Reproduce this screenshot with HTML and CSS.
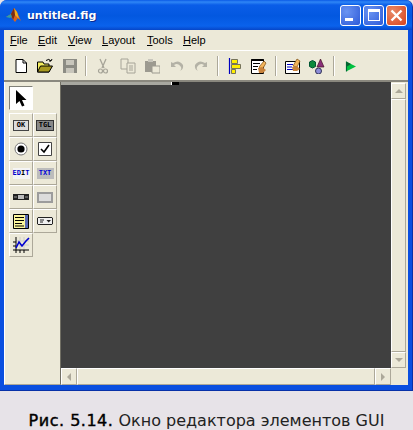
FILE: index.html
```html
<!DOCTYPE html>
<html lang="ru">
<head>
<meta charset="utf-8">
<title>untitled.fig</title>
<link rel="stylesheet" href="styles.css">
</head>
<body>
<div class="window">
  <div class="titlebar">
    <svg class="app-icon" width="16" height="16" viewBox="0 0 16 16"><path d="M0 10 L5 7 L8 1 L11 5 L15 14 L12 11 L9 15 L5 10 Z" fill="#d9641e"/><path d="M0 10 L5 7 L7 9 L4 11 Z" fill="#2f9ea8"/><path d="M8 1 L11 5 L13 12 L9 8 Z" fill="#f0b020"/><path d="M5 7 L8 1 L9 8 L7 13 Z" fill="#7a2c18"/></svg>
    <span class="title-text">untitled.fig</span>
    <div class="caption-btns">
      <div class="cbtn"><span class="glyph-min"></span></div>
      <div class="cbtn"><span class="glyph-max"></span></div>
      <div class="cbtn close"><svg width="13" height="13" viewBox="0 0 13 13"><path d="M1.5 1.5 L11.5 11.5 M11.5 1.5 L1.5 11.5" stroke="#fff" stroke-width="2.4"/></svg></div>
    </div>
  </div>
  <div class="client">
    <div class="menubar">
      <span class="menu"><u>F</u>ile</span>
      <span class="menu"><u>E</u>dit</span>
      <span class="menu"><u>V</u>iew</span>
      <span class="menu"><u>L</u>ayout</span>
      <span class="menu"><u>T</u>ools</span>
      <span class="menu"><u>H</u>elp</span>
    </div>
    <div class="toolbar">
      <svg class="tool" viewBox="0 0 16 16"><path d="M3 1.5 H10 L13.5 5 V14.5 H3 Z" fill="#fff" stroke="#000"/><path d="M10 1.5 V5 H13.5" fill="none" stroke="#000"/></svg>
      <svg class="tool" viewBox="0 0 16 16"><path d="M0.5 4 H6 L7 6 H12 V14 H0.5 Z" fill="#f4ee60" stroke="#000"/><path d="M0.5 14 L3.5 8 H15.5 L12 14 Z" fill="#a89a20" stroke="#000"/><path d="M9 2.5 Q12 0 14 3 M14 3 L12 3 M14 3 L15 1" fill="none" stroke="#000"/></svg>
      <svg class="tool" viewBox="0 0 16 16"><path d="M1 1 H15 V15 H1 Z" fill="#8c8c84"/><path d="M4 2 H12 V7 H4 Z" fill="#c8c6bc"/><path d="M4 10 H12 V15 H4 Z" fill="#c8c6bc"/></svg>
      <span class="sep"></span>
      <svg class="tool" viewBox="0 0 16 16"><path d="M5 1 L9 10 M11 1 L7 10" stroke="#a6a498" stroke-width="1.3"/><circle cx="5.5" cy="13" r="2" fill="none" stroke="#a6a498" stroke-width="1.2"/><circle cx="10.5" cy="13" r="2" fill="none" stroke="#a6a498" stroke-width="1.2"/></svg>
      <svg class="tool" viewBox="0 0 16 16"><path d="M1 1 H8 V11 H1 Z" fill="#ece9d8" stroke="#a6a498"/><path d="M7 5 H15 V15 H7 Z" fill="#ece9d8" stroke="#a6a498"/><path d="M9 8 H13 M9 10 H13 M9 12 H13" stroke="#a6a498"/></svg>
      <svg class="tool" viewBox="0 0 16 16"><path d="M1 3 H12 V14 H1 Z" fill="#9c9a90"/><path d="M4 1 H9 V4 H4 Z" fill="#c8c6bc"/><path d="M8 8 H16 V15 H8 Z" fill="#ece9d8" stroke="#9c9a90"/></svg>
      <svg class="tool" viewBox="0 0 16 16"><path d="M2 4 V9 H7 L5 7 Q9 4 12 9 Q13 12 10 13 Q15 12 14 7 Q10 1 4 5 Z" fill="#b4b2a6"/></svg>
      <svg class="tool" viewBox="0 0 16 16"><path d="M14 4 V9 H9 L11 7 Q7 4 4 9 Q3 12 6 13 Q1 12 2 7 Q6 1 12 5 Z" fill="#b4b2a6"/></svg>
      <span class="sep"></span>
      <svg class="tool" viewBox="0 0 16 16"><path d="M2.5 0 V16" stroke="#0000c0" stroke-width="1.2"/><path d="M4.5 1.5 H10.5 V5.5 H4.5 Z M4.5 6.5 H13.5 V10.5 H4.5 Z M4.5 11.5 H8.5 V15.5 H4.5 Z" fill="#ffee00" stroke="#555" stroke-width="0.8"/></svg>
      <svg class="tool" viewBox="0 0 16 16"><path d="M0.5 1.5 H12.5 V15.5 H0.5 Z" fill="#fff" stroke="#000"/><path d="M0.5 1 H12.5 V3 H0.5 Z" fill="#000"/><path d="M2 5.5 H9 M2 8.5 H7 M2 11.5 H6" stroke="#000"/><path d="M8 9 L13 3 L15 5 L11 12 Z" fill="#f2b45a" stroke="#7a4a10" stroke-width="0.7"/><path d="M7 10 L11 9 L15 12 L12 15 H8 Z" fill="#c8833c"/></svg>
      <span class="sep"></span>
      <svg class="tool" viewBox="0 0 16 16"><path d="M0.5 3.5 H14.5 V15.5 H0.5 Z" fill="#fff" stroke="#000"/><path d="M2 6.5 H8 M2 9 H7 M2 11.5 H9" stroke="#0000c0"/><path d="M8 8 L12 1 L15 3 L12 9 Z" fill="#f2b45a" stroke="#7a4a10" stroke-width="0.7"/><path d="M7 9 L12 8 L15 11 L12 13 H8 Z" fill="#c8833c"/></svg>
      <svg class="tool" viewBox="0 0 16 16"><path d="M0.5 4 L3.5 2.5 L6.5 4 V8.5 L3.5 10 L0.5 8.5 Z" fill="#0c8a3c" stroke="#053"/><path d="M11.5 1 L15 9 H8 Z" fill="#8a2f7a" stroke="#412" stroke-width="0.7"/><circle cx="9.5" cy="13" r="3" fill="#8d8dd8" stroke="#335"/></svg>
      <span class="sep"></span>
      <svg class="tool" viewBox="0 0 16 16"><path d="M3.5 3.5 V13.5" stroke="#063" stroke-width="1.2"/><path d="M4 4 L13 8.5 L4 13 Z" fill="#00c040"/><path d="M4 4 L8 6 L4 8.5 Z" fill="#086030"/></svg>
    </div>
    <div class="body">
      <div class="palette">
        <div class="pal-btn pressed"><svg width="12" height="17" viewBox="0 0 12 17"><path d="M1 0 V14 L4.5 11 L7 16.5 L9.5 15.5 L7 10 H11.5 Z" fill="#000"/></svg></div>
        <span class="pal-empty"></span>
        <div class="pal-btn"><span class="ic-ok">OK</span></div>
        <div class="pal-btn"><span class="ic-tgl">TGL</span></div>
        <div class="pal-btn"><svg width="14" height="14" viewBox="0 0 14 14"><circle cx="7" cy="7" r="6" fill="#fff" stroke="#777"/><circle cx="7" cy="7" r="3.6" fill="#000"/></svg></div>
        <div class="pal-btn"><svg width="14" height="14" viewBox="0 0 14 14"><path d="M0.5 0.5 H13.5 V13.5 H0.5 Z" fill="#fff" stroke="#444"/><path d="M3 7 L6 10 L11 3" fill="none" stroke="#000" stroke-width="1.6"/></svg></div>
        <div class="pal-btn"><span class="ic-edit">ED<span class="ibeam">I</span>T</span></div>
        <div class="pal-btn"><span class="ic-txt">TXT</span></div>
        <div class="pal-btn"><svg width="16" height="6" viewBox="0 0 16 6"><path d="M0 0 H16 V6 H0 Z" fill="#222"/><path d="M5 1 H11 V5 H5 Z" fill="#bbb"/><path d="M1 3 H4 M12 3 H15" stroke="#999"/></svg></div>
        <div class="pal-btn"><span class="ic-frame"></span></div>
        <div class="pal-btn"><svg width="16" height="15" viewBox="0 0 16 15"><path d="M0.5 0.5 H15.5 V14.5 H0.5 Z" fill="#fbf59a" stroke="#000"/><path d="M12 1 H15 V14 H12 Z" fill="#5a6ab0"/><path d="M2 3.5 H11 M2 6.5 H11 M2 9.5 H9 M2 12 H11" stroke="#000"/></svg></div>
        <div class="pal-btn"><svg width="16" height="8" viewBox="0 0 16 8"><path d="M1 0.5 H15 L15.5 1 V7 L15 7.5 H1 L0.5 7 V1 Z" fill="#f0f0f0" stroke="#222"/><path d="M3 3 H7 M3 5 H6" stroke="#222"/><path d="M9.5 3 H14 L11.7 5.5 Z" fill="#222"/></svg></div>
        <div class="pal-btn"><svg width="18" height="18" viewBox="0 0 18 18"><path d="M4 5 H17 M4 9 H17 M8 1 V14 M12 1 V14" stroke="#ccc"/><path d="M4 1 V14 H17" stroke="#000" fill="none"/><path d="M1 14 H4 M4 17 V14 M8 14 V17 M12 14 V17 M1 10 H4 M1 6 H4" stroke="#000"/><path d="M4 12 L7 6 L10 10 L14 5 L17 2" fill="none" stroke="#0000d0" stroke-width="1.6"/></svg></div>
      </div>
      <div class="figure-area">
        <div class="ruler"><span class="ruler-light"></span><span class="ruler-white"></span><span class="ruler-dark"></span></div>
        <div class="canvas"></div>
        <div class="hscroll">
          <div class="sbtn"><span class="arr-left"></span></div>
          <div class="htrack"></div>
          <div class="sbtn"><span class="arr-right"></span></div>
        </div>
      </div>
      <div class="vscroll">
        <div class="sbtn v"><span class="arr-up"></span></div>
        <div class="vtrack"></div>
        <div class="sbtn v"><span class="arr-down"></span></div>
        <div class="corner"></div>
      </div>
    </div>
  </div>
</div>
<p class="caption"><b>Рис. 5.14.</b> Окно редактора элементов GUI</p>
</body>
</html>
```
FILE: styles.css
```css
* { box-sizing: border-box; }
html, body { margin: 0; padding: 0; }
body { width: 413px; height: 430px; background: #e7e3e8; overflow: hidden; }
.window {
  width: 413px; height: 391px;
  display: flex; flex-direction: column;
  background: #0a4fe0;
  border-radius: 7px 7px 0 0;
  padding: 0 4px 5px 4px;
  border-right: 1px solid #0831a8;
  border-bottom: 1px solid #0831a8;
}
.titlebar {
  height: 30px; flex: none; margin: 0 -4px;
  display: flex; align-items: center;
  padding: 0 5px 0 6px;
  border-radius: 7px 7px 0 0;
  background: linear-gradient(#0a5ae6 0, #2f86f6 2px, #0a5de8 5px, #0358e0 16px, #0a62ec 26px, #0646c8 30px);
}
.app-icon { flex: none; }
.title-text {
  margin-left: 5px;
  font: bold 11px "DejaVu Sans", sans-serif;
  color: #fff;
  text-shadow: 1px 1px 0 #0a2a90;
}
.caption-btns { margin-left: auto; display: flex; gap: 2px; }
.cbtn {
  width: 21px; height: 21px;
  border: 1px solid #fff; border-radius: 3px;
  background: radial-gradient(circle at 30% 30%, #6a94f2, #2d5ad8);
  display: flex; align-items: center; justify-content: center;
}
.cbtn.close { background: radial-gradient(circle at 30% 30%, #e88a68, #d8431c); }
.glyph-min { width: 8px; height: 3px; background: #fff; margin: 9px 4px 0 0; }
.glyph-max { width: 12px; height: 12px; border: 1px solid #fff; border-top-width: 3px; }
.client { flex: 1; display: flex; flex-direction: column; background: #ece9d8; min-height: 0; }
.menubar {
  height: 20px; flex: none;
  display: grid;
  grid-template-columns: 28px 30px 34px 45px 36px auto;
  align-items: center;
  padding-left: 6px;
  font: 11px "Liberation Sans", sans-serif;
  color: #000;
}
.toolbar {
  height: 32px; flex: none;
  display: flex; align-items: center;
  padding: 0 0 2px 4.25px;
  border-top: 1px solid #fff;
  box-shadow: inset 0 -2px 0 #8a887e;
}
.tool { width: 16px; height: 16px; flex: none; margin: 0 4.25px; }
.sep {
  width: 2px; height: 20px; flex: none;
  background: linear-gradient(90deg, #aca899 50%, #fff 50%);
  margin: 0 3.5px;
}
.body { flex: 1; display: flex; min-height: 0; }
.palette {
  width: 57px; flex: none;
  padding: 4px 0 0 4px;
  display: grid;
  grid-template-columns: 24px 24px;
  grid-template-rows: 27px;
  grid-auto-rows: 24px;
  align-content: start;
  border-right: 1px solid #716f64;
  border-bottom: 1px solid #aca899;
  border-left: 1px solid #fff;
}
.pal-btn {
  display: flex; align-items: center; justify-content: center;
  border-top: 1px solid #fff; border-left: 1px solid #fff;
  border-right: 1px solid #aca899; border-bottom: 1px solid #aca899;
}
.pal-btn.pressed { background: #fff; border-color: #808078 #fff #fff #808078; height: 24px; }
.pal-empty { display: block; }
.ic-ok, .ic-tgl, .ic-edit, .ic-txt {
  font: bold 7px "DejaVu Sans Mono", monospace;
  display: block; text-align: center; line-height: 9px;
}
.ic-ok { width: 16px; height: 11px; background: #ddd; border: 1px solid #444; color: #000; }
.ic-tgl { width: 18px; height: 11px; background: #888; border: 1px solid #333; color: #000; }
.ic-edit { width: 17px; height: 11px; background: #f4f4f4; color: #0000c8; line-height: 11px; }
.ibeam { color: #000; }
.ic-txt { width: 17px; height: 11px; background: #bcbcbc; color: #0000d8; line-height: 11px; }
.ic-frame { display: block; width: 16px; height: 11px; background: #dcdcdc; border: 2px solid #9c9c9c; }
.figure-area { flex: 1; display: flex; flex-direction: column; min-width: 0; }
.ruler { height: 3px; flex: none; display: flex; background: #404040; }
.ruler-light { width: 110px; background: #a8a8a0; }
.ruler-white { width: 1px; background: #fff; }
.ruler-dark { width: 7px; background: #000; }
.canvas { flex: 1; background: #404040; }
.hscroll {
  height: 17px; flex: none; display: flex;
  background: #ece9d8;
}
.sbtn {
  width: 16px; flex: none;
  background: #ece9d8;
  border: 1px solid; border-color: #fff #aca899 #aca899 #fff;
  display: flex; align-items: center; justify-content: center;
}
.sbtn.v { width: 15px; height: 16px; }
.htrack { flex: 1; background: #ece9d8; border: 1px solid; border-color: #fff #aca899 #aca899 #fff; }
.arr-left { border: 4px solid transparent; border-right: 4px solid #aca899; border-left: 0; }
.arr-right { border: 4px solid transparent; border-left: 4px solid #aca899; border-right: 0; }
.arr-up { border: 4px solid transparent; border-bottom: 4px solid #aca899; border-top: 0; }
.arr-down { border: 4px solid transparent; border-top: 4px solid #aca899; border-bottom: 0; }
.vscroll { width: 17px; flex: none; display: flex; flex-direction: column; padding: 1px 2px 0 0; }
.vtrack { flex: 1; background: #ece9d8; border: 1px solid; border-color: #fff #aca899 #aca899 #fff; }
.corner { height: 17px; flex: none; background: #ece9d8; }
.caption {
  margin: 20px 0 0 0; text-align: center;
  font: 16px/19px "DejaVu Sans", sans-serif;
  white-space: nowrap;
  color: #222;
}
.caption b { font-weight: 400; color: #000; letter-spacing: 0.5px; -webkit-text-stroke: 0.4px #000; }
```
